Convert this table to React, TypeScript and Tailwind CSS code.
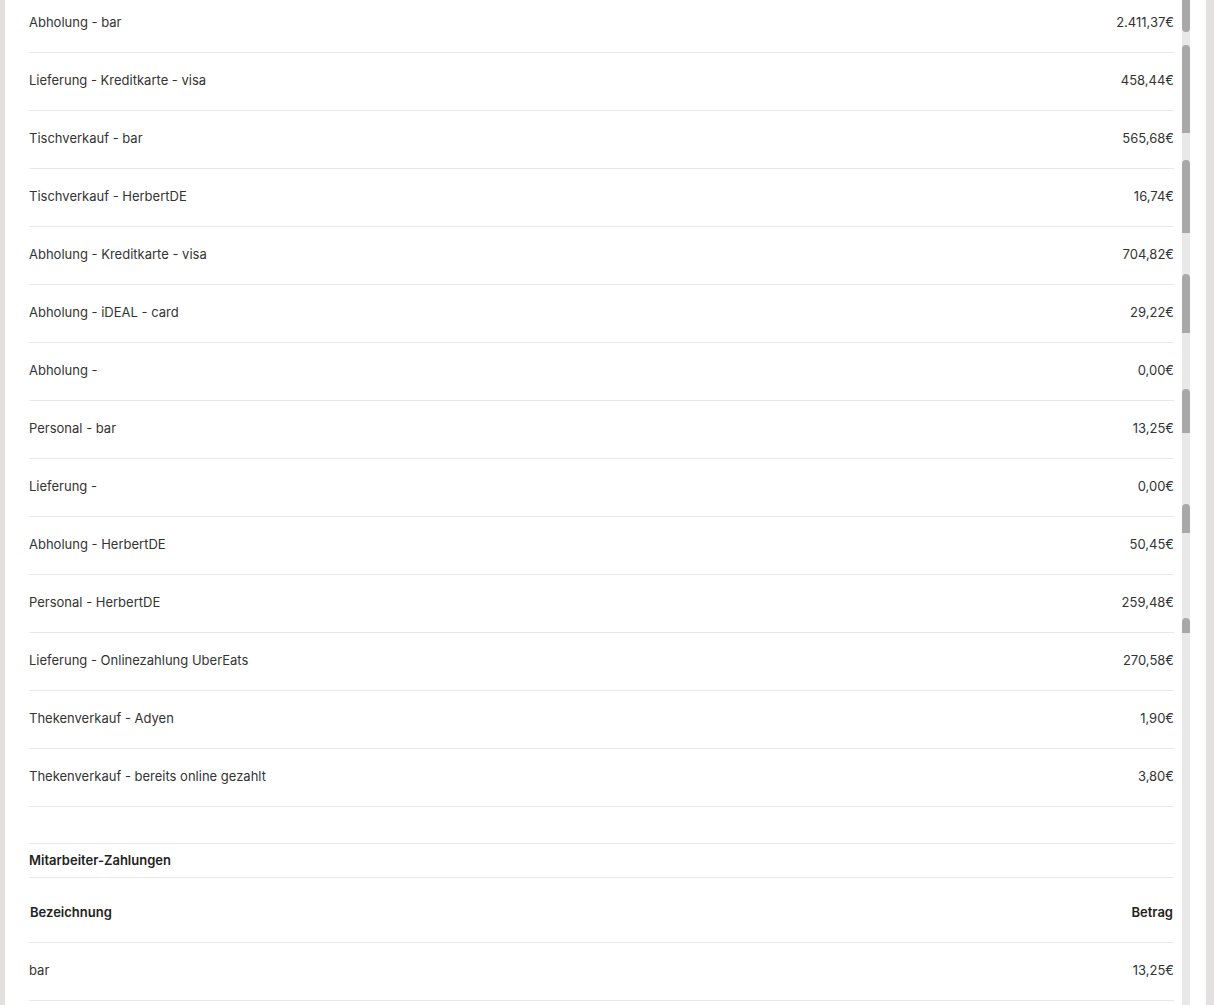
import React from 'react';

const rows: [string, string][] = [
  ['Abholung - bar', '2.411,37€'],
  ['Lieferung - Kreditkarte - visa', '458,44€'],
  ['Tischverkauf - bar', '565,68€'],
  ['Tischverkauf - HerbertDE', '16,74€'],
  ['Abholung - Kreditkarte - visa', '704,82€'],
  ['Abholung - iDEAL - card', '29,22€'],
  ['Abholung -', '0,00€'],
  ['Personal - bar', '13,25€'],
  ['Lieferung -', '0,00€'],
  ['Abholung - HerbertDE', '50,45€'],
  ['Personal - HerbertDE', '259,48€'],
  ['Lieferung - Onlinezahlung UberEats', '270,58€'],
  ['Thekenverkauf - Adyen', '1,90€'],
  ['Thekenverkauf - bereits online gezahlt', '3,80€'],
];

// scrollbar thumbs as captured (stitched screenshot artefact)
const thumbs = [
  { top: 0, h: 32, cls: 'rounded-b-[4px]' },
  { top: 45, h: 88, cls: 'rounded-t-[4px]' },
  { top: 160, h: 73, cls: 'rounded-t-[4px]' },
  { top: 274, h: 59, cls: 'rounded-t-[4px]' },
  { top: 389, h: 44, cls: 'rounded-t-[4px]' },
  { top: 504, h: 29, cls: 'rounded-t-[4px]' },
  { top: 618, h: 15, cls: 'rounded-t-[4px]' },
];

function Row({ label, value }: { label: string; value: string }) {
  return (
    <div className="flex h-[58px] items-center justify-between border-b border-[#e8e8e8] pb-[2px] text-[13px] text-[#333]">
      <span>{label}</span>
      <span>{value}</span>
    </div>
  );
}

export default function App() {
  return (
    <div
      className="flex h-[1005px] overflow-hidden bg-white"
      style={{ fontFamily: 'Inter, "Noto Sans", sans-serif' }}
    >
      <div className="w-[5px] shrink-0 bg-[#e4e0e0]" />
      <main className="flex-1 pl-6 pr-2">
        <div className="-mt-[5px]">
          {rows.map(([l, v]) => (
            <Row key={l} label={l} value={v} />
          ))}
          <div className="h-[37px] border-b border-[#e8e8e8]" />
          <div className="flex h-[34px] items-center border-b border-[#e8e8e8] text-[13px] font-semibold text-[#222]">
            Mitarbeiter-Zahlungen
          </div>
          <div className="flex h-[65px] items-center justify-between border-b border-[#e8e8e8] px-px pt-[6px] text-[13px] font-semibold text-[#222]">
            <span>Bezeichnung</span>
            <span>Betrag</span>
          </div>
          <Row label="bar" value="13,25€" />
        </div>
      </main>
      <div className="relative w-2 shrink-0 bg-[#e8e8e8]">
        {thumbs.map((t) => (
          <div
            key={t.top}
            className={`absolute left-0 w-2 bg-[#a8a8a8] ${t.cls}`}
            style={{ top: t.top, height: t.h }}
          />
        ))}
      </div>
      <div className="w-4 shrink-0 bg-white" />
      <div className="w-2 shrink-0 bg-[#e4e0e0]" />
    </div>
  );
}
